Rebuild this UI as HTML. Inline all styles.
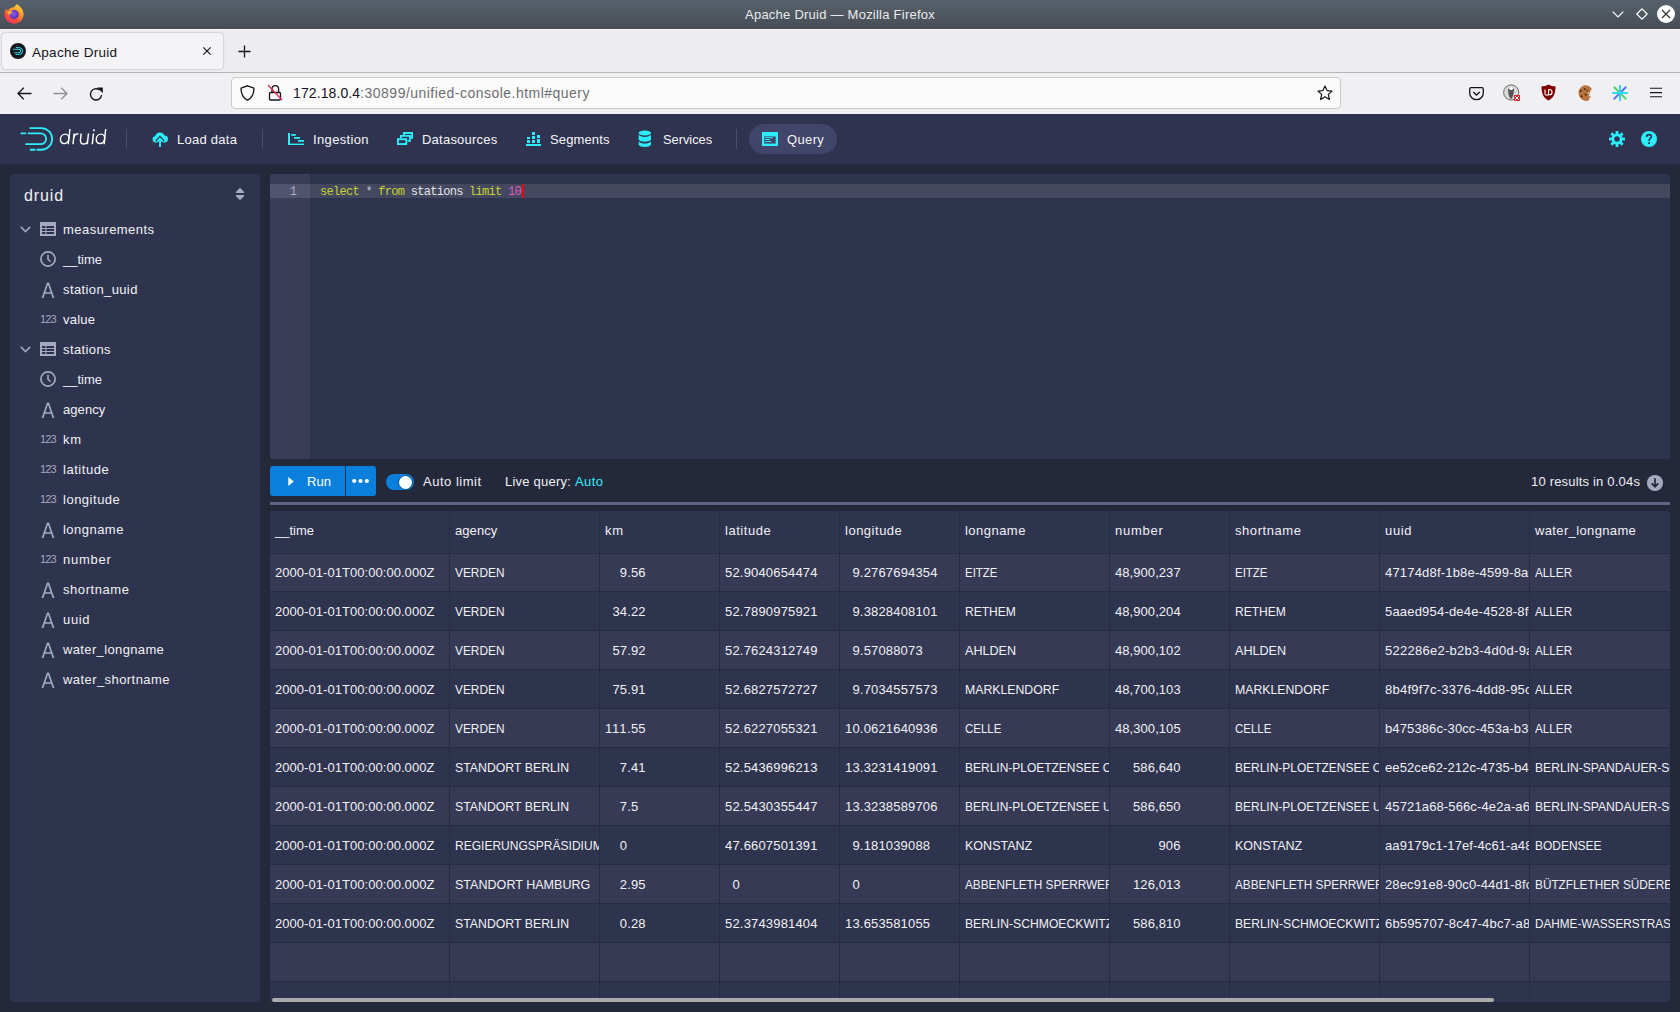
<!DOCTYPE html><html><head><meta charset="utf-8">
<style>
*{box-sizing:border-box;margin:0;padding:0}
html,body{width:1680px;height:1012px;overflow:hidden;background:#24283b;font-family:"Liberation Sans",sans-serif;position:relative}
.a{position:absolute;white-space:nowrap}
svg{position:absolute;display:block;overflow:visible}
#title{left:0;top:0;width:1680px;height:29px;background:linear-gradient(#58616b,#464d56)}
#tabbar{left:0;top:29px;width:1680px;height:44px;background:#ededf0;border-top:1px solid #f8f8f9;border-bottom:1px solid #b4b4b7}
#tab{left:2px;top:33px;width:221px;height:36px;background:#f4f4f6;border-radius:4px;box-shadow:0 0 2px rgba(0,0,0,.35)}
#nav{left:0;top:73px;width:1680px;height:41px;background:#f0f0f3}
#url{left:231px;top:77px;width:1110px;height:32px;background:#fbfbfc;border:1px solid #c9c9cc;border-radius:4px}
#hdr{left:0;top:114px;width:1680px;height:50px;background:#2f3350}
.nt{color:#f5f6f9;font-size:13px;top:132px;line-height:16px}
.ndiv{width:1px;background:#4b4f69;top:129px;height:20px}
#pill{left:749px;top:124px;width:88px;height:30px;border-radius:15px;background:#41456a}
.panel{background:#2f344e;border-radius:3px}
.st{color:#f0f1f5;font-size:13px;line-height:16px;left:63px}
.ic{fill:#a5aac0}
</style></head><body>
<!-- title bar -->
<div class="a" id="title"></div>
<svg style="left:4px;top:4px" width="20" height="20" viewBox="0 0 20 20">
 <defs><linearGradient id="fg1" x1="0.8" y1="0" x2="0.2" y2="1"><stop offset="0" stop-color="#ffde3a"></stop><stop offset=".35" stop-color="#ff9a2a"></stop><stop offset=".7" stop-color="#ff4d3a"></stop><stop offset="1" stop-color="#e72f74"></stop></linearGradient>
 <radialGradient id="fg2" cx="0.45" cy="0.45" r="0.6"><stop offset="0" stop-color="#8e5cf0"></stop><stop offset="1" stop-color="#4b2bb5"></stop></radialGradient></defs>
 <path d="M12.3 0 C15.5 1.8 19.6 5 19.6 10.2 A9.6 9.6 0 0 1 0.4 10.2 C0.4 7.6 1.4 5.6 2.6 4.4 C2.6 5.6 3.2 6.4 4 6.8 C4.8 4.6 7 3.2 9.2 3.4 C10.8 2.4 12 1.4 12.3 0 Z" fill="url(#fg1)"></path>
 <circle cx="10.2" cy="10.6" r="4.6" fill="url(#fg2)"></circle>
 <path d="M3 8 C4.5 6.5 7.5 6.8 9 8.6 C7.4 8.8 6.4 9.6 6.2 11 C4.8 10.6 3.8 9.6 3 8Z" fill="#ffb23a"></path>
</svg>
<div class="a" style="left:0;top:0;width:1680px;height:28px;text-align:center;color:#e8eaec;font-size:13px;line-height:29px"><span style="position: relative; left: 0px; letter-spacing: 0.239px;">Apache Druid — Mozilla Firefox</span></div>
<svg style="left:1612px;top:11px" width="12" height="7" viewBox="0 0 12 7"><path d="M0.7 0.7 L6 6 L11.3 0.7" fill="none" stroke="#fff" stroke-width="1.2"></path></svg>
<svg style="left:1636px;top:8px" width="12" height="12" viewBox="0 0 12 12"><path d="M6 0.8 L11.2 6 L6 11.2 L0.8 6 Z" fill="none" stroke="#fff" stroke-width="1.2"></path></svg>
<svg style="left:1657px;top:5px" width="18" height="18" viewBox="0 0 18 18"><circle cx="9" cy="9" r="9" fill="#fff"></circle><path d="M5 5 L13 13 M13 5 L5 13" stroke="#2a2e33" stroke-width="1.1"></path></svg>

<!-- tab bar -->
<div class="a" id="tabbar"></div>
<div class="a" id="tab"></div>
<svg style="left:10px;top:43px" width="16" height="16" viewBox="0 0 16 16"><circle cx="8" cy="8" r="8" fill="#16181f"></circle>
 <g fill="none" stroke="#2ceefb" stroke-width="0.9" stroke-linecap="round"><path d="M6.3 4.6 H9.2 A3.45 3.45 0 0 1 9.2 11.5 H8"></path><path d="M5.9 11.5 H7"></path><path d="M5.5 6.3 H9 A1.72 1.72 0 0 1 9 9.75 H4.7"></path><path d="M3.3 6.3 H4.5"></path></g></svg>
<div class="a" style="left:32px;top:45px;font-size:13.5px;line-height:16px;color:#15141a"><span style="letter-spacing: 0.303px;">Apache Druid</span></div>
<svg style="left:203px;top:47px" width="8" height="8" viewBox="0 0 8 8"><path d="M0.3 0.3 L7.7 7.7 M7.7 0.3 L0.3 7.7" stroke="#15141a" stroke-width="1.1"></path></svg>
<svg style="left:238px;top:45px" width="13" height="13" viewBox="0 0 13 13"><path d="M6.5 0.5 V12.5 M0.5 6.5 H12.5" stroke="#15141a" stroke-width="1.3"></path></svg>

<!-- nav bar -->
<div class="a" id="nav"></div>
<svg style="left:17px;top:87px" width="15" height="13" viewBox="0 0 15 13"><path d="M14.5 6.5 H1.2 M6.8 0.8 L1 6.5 L6.8 12.2" fill="none" stroke="#15141a" stroke-width="1.3"></path></svg>
<svg style="left:53px;top:87px" width="15" height="13" viewBox="0 0 15 13"><path d="M0.5 6.5 H13.8 M8.2 0.8 L14 6.5 L8.2 12.2" fill="none" stroke="#8f8f94" stroke-width="1.3"></path></svg>
<svg style="left:89px;top:87px" width="15" height="15" viewBox="0 0 15 15"><path d="M12.6 8.2 A5.6 5.6 0 1 1 10.5 3" fill="none" stroke="#15141a" stroke-width="1.4"></path><path d="M8.2 0.6 L13.8 0.6 L13.8 6.2 Z" fill="#15141a"></path></svg>
<div class="a" id="url"></div>
<svg style="left:240px;top:85px" width="15" height="16" viewBox="0 0 15 16"><path d="M7.5 0.8 L14 3.2 C14 9.5 11.5 13.2 7.5 15.2 C3.5 13.2 1 9.5 1 3.2 Z" fill="none" stroke="#15141a" stroke-width="1.3"></path></svg>
<svg style="left:268px;top:84px" width="15" height="17" viewBox="0 0 15 17"><path d="M2 8.5 H11.5 A1 1 0 0 1 12.5 9.5 V15 A1 1 0 0 1 11.5 16 H2.5 A1 1 0 0 1 1.5 15 V9.5 A1 1 0 0 1 2.5 8.5 M4 8.5 V5 A3.3 3.3 0 0 1 10.6 5 V8.5" fill="none" stroke="#15141a" stroke-width="1.3"></path><path d="M0 1 L14 16" stroke="#e22850" stroke-width="1.3"></path></svg>
<div class="a" style="left:293px;top:84px;font-size:14px;line-height:18px;color:#15141a"><span style="letter-spacing: 0.104px;">172.18.0.4</span><span style="color: rgb(110, 110, 115); letter-spacing: 0.475px;">:30899/unified-console.html#query</span></div>
<svg style="left:1317px;top:85px" width="16" height="16" viewBox="0 0 16 16"><path d="M8 1 L10.1 5.6 L15 6.1 L11.3 9.4 L12.4 14.4 L8 11.8 L3.6 14.4 L4.7 9.4 L1 6.1 L5.9 5.6 Z" fill="none" stroke="#15141a" stroke-width="1.2" stroke-linejoin="round"></path></svg>
<svg style="left:1468.5px;top:86.5px" width="15" height="13" viewBox="0 0 15 13"><path d="M2 0.7 H13 A1.3 1.3 0 0 1 14.3 2 V5.9 A6.8 6.8 0 0 1 0.7 5.9 V2 A1.3 1.3 0 0 1 2 0.7 Z" fill="none" stroke="#15141a" stroke-width="1.3"></path><path d="M4.3 5 L7.5 8 L10.7 5" fill="none" stroke="#15141a" stroke-width="1.4"></path></svg>
<svg style="left:1503px;top:84px" width="18" height="18" viewBox="0 0 18 18"><circle cx="8.2" cy="8.5" r="7.6" fill="#d8d8d8" stroke="#6a6a6a" stroke-width="1"></circle><path d="M5 4 C5 9 6 14 8 15 C10 14 11 9 11 4 C10 6 6 6 5 4Z" fill="#555"></path><circle cx="8.2" cy="4.5" r="1.6" fill="#fff"></circle><rect x="11" y="11" width="6" height="6" fill="#e02828"></rect><path d="M12 12 L16 16 M16 12 L12 16" stroke="#fff" stroke-width="1"></path></svg>
<svg style="left:1541px;top:84px" width="15" height="17" viewBox="0 0 15 17"><path d="M7.5 0.5 C9.5 1.8 12 2.3 14.5 2.3 C14.5 10 12.5 14 7.5 16.5 C2.5 14 0.5 10 0.5 2.3 C3 2.3 5.5 1.8 7.5 0.5Z" fill="#800000"></path><path d="M4 5.5 V9.5 A1.8 1.8 0 0 0 7.6 9.5 V5.5" fill="none" stroke="#fff" stroke-width="1.1"></path><path d="M7.6 5.5 H8.4 A2.6 2.6 0 0 1 8.4 10.8 H7" fill="none" stroke="#fff" stroke-width="1.1"></path></svg>
<svg style="left:1576px;top:85px" width="17" height="17" viewBox="0 0 17 17"><path d="M8.2 0.2 A8 8 0 0 1 16 4.2 C15 4.6 14.2 5.6 14.6 6.6 C13.6 7 13.2 8.2 14 9 C13 9.6 12.8 11 13.8 11.6 C13.4 13 13.2 14.6 12.8 15.6 A8 8 0 1 1 8.2 0.2 Z" fill="#b8743e"></path><circle cx="4.8" cy="6" r="1" fill="#3e2414"></circle><circle cx="8.6" cy="4" r="0.9" fill="#3e2414"></circle><circle cx="5.6" cy="11.2" r="1" fill="#3e2414"></circle><circle cx="9.6" cy="9.4" r="1" fill="#3e2414"></circle><circle cx="11.2" cy="5.6" r="0.8" fill="#3e2414"></circle><circle cx="14.2" cy="12" r="0.9" fill="#d9a070"></circle><circle cx="12.6" cy="8.2" r="0.8" fill="#e9d2bd"></circle></svg>
<svg style="left:1612px;top:85px" width="16" height="16" viewBox="0 0 16 16" stroke-width="2" stroke-linecap="round"><path d="M2.3 2.3 L13.7 13.7" stroke="#55d66b"></path><path d="M13.7 2.3 L2.3 13.7" stroke="#5a78f0"></path><path d="M0.8 8 H15.2" stroke="#2fdcf5"></path><path d="M8 0.8 V15.2" stroke="#36d2f2"></path></svg>
<svg style="left:1650px;top:87px" width="12" height="11" viewBox="0 0 12 11"><path d="M0 1.25 H12 M0 5.6 H12 M0 9.75 H12" stroke="#15141a" stroke-width="1.2"></path></svg>
<!-- druid header -->
<div class="a" id="hdr"></div>
<svg style="left:0;top:0" width="60" height="160" viewBox="0 0 60 160"><g fill="none" stroke="#2ceefb" stroke-width="1.8" stroke-linecap="round">
<path d="M30.3 128.05 H41.25 A10.85 10.85 0 0 1 41.25 149.75 H37.4"></path>
<path d="M30.6 149.75 H34.8"></path>
<path d="M28.4 133.35 H40.7 A5.42 5.42 0 0 1 40.7 144.2 H26"></path>
<path d="M21.3 133.35 H25.4"></path>
</g></svg>
<svg style="left:0;top:0" width="120" height="160" viewBox="0 0 120 160"><g transform="translate(0 144.3) skewX(-6) translate(0 -144.3)" fill="none" stroke="#fff" stroke-width="1.45">
<ellipse cx="64.1" cy="138.85" rx="4.2" ry="4.75"></ellipse><path d="M68.3 128.9 V144.3"></path>
<path d="M73 144.3 V133.6 M73 137.8 C73.6 135 75.2 133.7 77.4 133.8"></path>
<path d="M80 133.4 V140 A3.65 4.1 0 0 0 87.3 140 V133.4 M87.3 138.5 V144.3"></path>
<path d="M92.3 133.4 V144.3"></path>
<ellipse cx="99.9" cy="138.85" rx="4.2" ry="4.75"></ellipse><path d="M104.1 128.9 V144.3"></path>
</g><g transform="translate(0 144.3) skewX(-6) translate(0 -144.3)" fill="#fff"><circle cx="92.5" cy="130.3" r="1"></circle></g></svg>
<div class="a ndiv" style="left:126px"></div>
<!-- load data icon -->
<svg style="left:152px;top:131px" width="16" height="16" viewBox="0 0 16 16">
<path d="M3.5 11.5 A3.3 3.3 0 0 1 3.2 5 A4.9 4.9 0 0 1 12.4 4.6 A3.45 3.45 0 0 1 12.6 11.5 Z" fill="#2ceefb"></path>
<path d="M8 16 V8.5 M4.6 10.8 L8 7.2 L11.4 10.8" fill="none" stroke="#2f3350" stroke-width="3.6"></path>
<path d="M8 16 V8.3 M5.1 10.6 L8 7.6 L10.9 10.6" fill="none" stroke="#2ceefb" stroke-width="1.9"></path>
</svg>
<div class="a nt" style="left:177px"><span style="letter-spacing: 0.268px;">Load data</span></div>
<div class="a ndiv" style="left:262px"></div>
<!-- ingestion icon gantt -->
<svg style="left:288px;top:133px" width="16" height="12" viewBox="0 0 16 12" fill="#2ceefb">
<rect x="0" y="0" width="2" height="12"></rect><rect x="0" y="10.6" width="16" height="1.4"></rect>
<rect x="3.2" y="1" width="4.6" height="1.8"></rect><rect x="6" y="4" width="6" height="1.8"></rect><rect x="10" y="7" width="6" height="1.8"></rect>
</svg>
<div class="a nt" style="left:313px"><span style="letter-spacing: 0.352px;">Ingestion</span></div>
<!-- datasources multi-select -->
<svg style="left:397px;top:132px" width="16" height="13" viewBox="0 0 16 13" fill="none" stroke="#2ceefb" stroke-width="1.9">
<rect x="0.95" y="7.2" width="8.3" height="4.85"></rect>
<path d="M3.9 6.2 V3.9 H12.9 V8.9 H10.5"></path>
<path d="M6.9 3 V0.95 H15.05 V5.9 H13.8"></path>
</svg>
<div class="a nt" style="left:422px"><span style="letter-spacing: 0.233px;">Datasources</span></div>
<!-- segments stacked-chart -->
<svg style="left:526px;top:132px" width="16" height="14" viewBox="0 0 16 14" fill="#2ceefb">
<rect x="0" y="12" width="15" height="2"></rect>
<rect x="1" y="5" width="3" height="2"></rect><rect x="1" y="8" width="3" height="3"></rect>
<rect x="6" y="0" width="3" height="3"></rect><rect x="6" y="4" width="3" height="3"></rect><rect x="6" y="8" width="3" height="3"></rect>
<rect x="11" y="3" width="3" height="3"></rect><rect x="11" y="7" width="3" height="4"></rect>
</svg>
<div class="a nt" style="left:550px"><span style="letter-spacing: 0.129px;">Segments</span></div>
<!-- services database -->
<svg style="left:638px;top:130px" width="14" height="18" viewBox="0 0 14 18" fill="#2ceefb">
<ellipse cx="6.8" cy="3" rx="6.2" ry="2.6"></ellipse>
<path d="M0.6 4.6 C1.5 6.3 4 6.9 6.8 6.9 C9.6 6.9 12.1 6.3 13 4.6 V9.6 C12.1 11.2 9.6 11.8 6.8 11.8 C4 11.8 1.5 11.2 0.6 9.6 Z"></path>
<path d="M0.6 11.3 C1.5 13 4 13.6 6.8 13.6 C9.6 13.6 12.1 13 13 11.3 V14.6 C12.1 16.4 9.6 17 6.8 17 C4 17 1.5 16.4 0.6 14.6 Z"></path>
</svg>
<div class="a nt" style="left:663px"><span style="display: inline-block; transform-origin: 0px 0px; transform: scaleX(0.9846);">Services</span></div>
<div class="a ndiv" style="left:736px"></div>
<div class="a" id="pill"></div>
<svg style="left:762px;top:132px" width="16" height="14" viewBox="0 0 16 14">
<rect x="0" y="0" width="16" height="14" fill="#2ceefb"></rect>
<rect x="2.3" y="4.4" width="11.4" height="7.2" fill="#41456a"></rect>
<rect x="3.2" y="5.2" width="7.8" height="1" fill="#2ceefb"></rect><rect x="3.2" y="7" width="4.6" height="1" fill="#2ceefb"></rect><rect x="3.2" y="9" width="6" height="1" fill="#2ceefb"></rect>
</svg>
<div class="a nt" style="left:787px"><span style="letter-spacing: 0.365px;">Query</span></div>
<!-- cog -->
<svg style="left:1609px;top:131px" width="16" height="16" viewBox="0 0 16 16">
<g fill="#2ceefb"><rect x="6.6" y="0" width="2.8" height="16"></rect><rect x="0" y="6.6" width="16" height="2.8"></rect>
<rect x="6.6" y="0" width="2.8" height="16" transform="rotate(45 8 8)"></rect><rect x="0" y="6.6" width="16" height="2.8" transform="rotate(45 8 8)"></rect>
<circle cx="8" cy="8" r="5.6"></circle></g><circle cx="8" cy="8" r="2.75" fill="#2f3350"></circle>
</svg>
<!-- help -->
<svg style="left:1641px;top:131px" width="16" height="16" viewBox="0 0 16 16">
<circle cx="8" cy="8" r="8" fill="#2ceefb"></circle>
<path d="M5.6 5.9 C5.6 4.4 6.6 3.6 8 3.6 C9.5 3.6 10.4 4.5 10.4 5.6 C10.4 7.2 8.5 7.4 8.1 9.2 V10" fill="none" stroke="#2f3350" stroke-width="1.6"></path>
<rect x="7.2" y="11.2" width="1.8" height="1.8" fill="#2f3350"></rect>
</svg>
<!-- sidebar -->
<div class="a panel" style="left:10px;top:174px;width:250px;height:828px"></div>
<div class="a" style="left:24px;top:187px;font-size:16px;line-height:18px;color:#f0f1f5"><span style="letter-spacing: 0.886px;">druid</span></div>
<svg style="left:235px;top:187px" width="10" height="14" viewBox="0 0 10 14"><path d="M5 0.7 L9.1 5 V5.9 H0.9 V5 Z M0.9 8 H9.1 V8.9 L5 13.2 L0.9 8.9 Z" fill="#a5aac0"></path></svg>
<svg style="left:20px;top:226px" width="11" height="7" viewBox="0 0 11 7"><path d="M0.8 0.8 L5.5 5.5 L10.2 0.8" fill="none" stroke="#a5aac0" stroke-width="1.6"></path></svg>
<svg style="left:40px;top:222px" width="16" height="14" viewBox="0 0 16 14"><rect x="0" y="0" width="16" height="14" fill="#a5aac0"></rect><rect x="2" y="4" width="3.4" height="2" fill="#2f344e"></rect><rect x="6.4" y="4" width="7.6" height="2" fill="#2f344e"></rect><rect x="2" y="7" width="3.4" height="2" fill="#2f344e"></rect><rect x="6.4" y="7" width="7.6" height="2" fill="#2f344e"></rect><rect x="2" y="10" width="3.4" height="2" fill="#2f344e"></rect><rect x="6.4" y="10" width="7.6" height="2" fill="#2f344e"></rect></svg>
<div class="a st" style="top:222px"><span style="letter-spacing: 0.464px;">measurements</span></div>
<svg style="left:40px;top:251px" width="16" height="16" viewBox="0 0 16 16"><circle cx="8" cy="8" r="7.1" fill="none" stroke="#a5aac0" stroke-width="1.7"></circle><path d="M8 3.8 V8.2 L10.6 10.8" fill="none" stroke="#a5aac0" stroke-width="1.6"></path></svg>
<div class="a st" style="top:252px"><span style="display: inline-block; transform-origin: 0px 0px; transform: scaleX(0.9971);">__time</span></div>
<svg style="left:41px;top:282px" width="14" height="16" viewBox="0 0 14 16"><path d="M0.6 16 L6 0.6 H8 L13.4 16 H11.6 L10.2 11.8 H3.8 L2.4 16 Z M4.4 10.2 H9.6 L7 2.6 Z" fill="#a5aac0" fill-rule="evenodd"></path></svg>
<div class="a st" style="top:282px"><span style="letter-spacing: 0.387px;">station_uuid</span></div>
<div class="a" style="left:40px;top:312px;font-size:11px;line-height:14px;color:#a5aac0;letter-spacing:-0.9px">123</div>
<div class="a st" style="top:312px"><span style="letter-spacing: 0.245px;">value</span></div>
<svg style="left:20px;top:346px" width="11" height="7" viewBox="0 0 11 7"><path d="M0.8 0.8 L5.5 5.5 L10.2 0.8" fill="none" stroke="#a5aac0" stroke-width="1.6"></path></svg>
<svg style="left:40px;top:342px" width="16" height="14" viewBox="0 0 16 14"><rect x="0" y="0" width="16" height="14" fill="#a5aac0"></rect><rect x="2" y="4" width="3.4" height="2" fill="#2f344e"></rect><rect x="6.4" y="4" width="7.6" height="2" fill="#2f344e"></rect><rect x="2" y="7" width="3.4" height="2" fill="#2f344e"></rect><rect x="6.4" y="7" width="7.6" height="2" fill="#2f344e"></rect><rect x="2" y="10" width="3.4" height="2" fill="#2f344e"></rect><rect x="6.4" y="10" width="7.6" height="2" fill="#2f344e"></rect></svg>
<div class="a st" style="top:342px"><span style="letter-spacing: 0.39px;">stations</span></div>
<svg style="left:40px;top:371px" width="16" height="16" viewBox="0 0 16 16"><circle cx="8" cy="8" r="7.1" fill="none" stroke="#a5aac0" stroke-width="1.7"></circle><path d="M8 3.8 V8.2 L10.6 10.8" fill="none" stroke="#a5aac0" stroke-width="1.6"></path></svg>
<div class="a st" style="top:372px"><span style="display: inline-block; transform-origin: 0px 0px; transform: scaleX(0.9971);">__time</span></div>
<svg style="left:41px;top:402px" width="14" height="16" viewBox="0 0 14 16"><path d="M0.6 16 L6 0.6 H8 L13.4 16 H11.6 L10.2 11.8 H3.8 L2.4 16 Z M4.4 10.2 H9.6 L7 2.6 Z" fill="#a5aac0" fill-rule="evenodd"></path></svg>
<div class="a st" style="top:402px"><span style="letter-spacing: 0.069px;">agency</span></div>
<div class="a" style="left:40px;top:432px;font-size:11px;line-height:14px;color:#a5aac0;letter-spacing:-0.9px">123</div>
<div class="a st" style="top:432px"><span style="letter-spacing: 0.786px;">km</span></div>
<div class="a" style="left:40px;top:462px;font-size:11px;line-height:14px;color:#a5aac0;letter-spacing:-0.9px">123</div>
<div class="a st" style="top:462px"><span style="letter-spacing: 0.538px;">latitude</span></div>
<div class="a" style="left:40px;top:492px;font-size:11px;line-height:14px;color:#a5aac0;letter-spacing:-0.9px">123</div>
<div class="a st" style="top:492px"><span style="letter-spacing: 0.508px;">longitude</span></div>
<svg style="left:41px;top:522px" width="14" height="16" viewBox="0 0 14 16"><path d="M0.6 16 L6 0.6 H8 L13.4 16 H11.6 L10.2 11.8 H3.8 L2.4 16 Z M4.4 10.2 H9.6 L7 2.6 Z" fill="#a5aac0" fill-rule="evenodd"></path></svg>
<div class="a st" style="top:522px"><span style="letter-spacing: 0.466px;">longname</span></div>
<div class="a" style="left:40px;top:552px;font-size:11px;line-height:14px;color:#a5aac0;letter-spacing:-0.9px">123</div>
<div class="a st" style="top:552px"><span style="letter-spacing: 0.756px;">number</span></div>
<svg style="left:41px;top:582px" width="14" height="16" viewBox="0 0 14 16"><path d="M0.6 16 L6 0.6 H8 L13.4 16 H11.6 L10.2 11.8 H3.8 L2.4 16 Z M4.4 10.2 H9.6 L7 2.6 Z" fill="#a5aac0" fill-rule="evenodd"></path></svg>
<div class="a st" style="top:582px"><span style="letter-spacing: 0.567px;">shortname</span></div>
<svg style="left:41px;top:612px" width="14" height="16" viewBox="0 0 14 16"><path d="M0.6 16 L6 0.6 H8 L13.4 16 H11.6 L10.2 11.8 H3.8 L2.4 16 Z M4.4 10.2 H9.6 L7 2.6 Z" fill="#a5aac0" fill-rule="evenodd"></path></svg>
<div class="a st" style="top:612px"><span style="letter-spacing: 0.659px;">uuid</span></div>
<svg style="left:41px;top:642px" width="14" height="16" viewBox="0 0 14 16"><path d="M0.6 16 L6 0.6 H8 L13.4 16 H11.6 L10.2 11.8 H3.8 L2.4 16 Z M4.4 10.2 H9.6 L7 2.6 Z" fill="#a5aac0" fill-rule="evenodd"></path></svg>
<div class="a st" style="top:642px"><span style="letter-spacing: 0.362px;">water_longname</span></div>
<svg style="left:41px;top:672px" width="14" height="16" viewBox="0 0 14 16"><path d="M0.6 16 L6 0.6 H8 L13.4 16 H11.6 L10.2 11.8 H3.8 L2.4 16 Z M4.4 10.2 H9.6 L7 2.6 Z" fill="#a5aac0" fill-rule="evenodd"></path></svg>
<div class="a st" style="top:672px"><span style="letter-spacing: 0.429px;">water_shortname</span></div>
<!-- editor -->
<div class="a panel" style="left:270px;top:174px;width:1400px;height:285px;overflow:hidden">
  <div class="a" style="left:0;top:0;width:40px;height:285px;background:#393d57"></div>
  <div class="a" style="left:0;top:10px;width:40px;height:14px;background:#50546f"></div>
  <div class="a" style="left:40px;top:10px;width:1360px;height:14px;background:#44485f"></div>
</div>
<div class="a" style="left:270px;top:185px;width:27px;text-align:right;font-family:'Liberation Mono',monospace;font-size:12px;line-height:14px;color:#a9adc0">1</div>
<div class="a" style="left:320px;top:185px;font-family:'Liberation Mono',monospace;font-size:12px;letter-spacing:-0.72px;line-height:14px;color:#e2e4ea"><span style="color:#c5d32e">select</span> <span style="color:#c9cbd6">*</span> <span style="color:#c5d32e">from</span> stations <span style="color:#c5d32e">limit</span> <span style="color:#df5cc0">10</span></div>
<div class="a" style="left:522px;top:184px;width:2px;height:14px;background:#e40a0a"></div>

<!-- toolbar -->
<div class="a" style="left:270px;top:466px;width:106px;height:30px;background:#0a80dc;border-radius:3px"></div>
<div class="a" style="left:345px;top:466px;width:1px;height:30px;background:#1c2a44"></div>
<svg style="left:288px;top:477px" width="6" height="9" viewBox="0 0 6 9"><path d="M0.3 0 L5.8 4.5 L0.3 9 Z" fill="#fff"></path></svg>
<div class="a" style="left:307px;top:474px;font-size:13px;line-height:16px;color:#fff"><span style="letter-spacing: 0.045px;">Run</span></div>
<svg style="left:352px;top:478px" width="17" height="6" viewBox="0 0 17 6" fill="#fff"><circle cx="2.2" cy="3" r="2.1"></circle><circle cx="8.5" cy="3" r="2.1"></circle><circle cx="14.8" cy="3" r="2.1"></circle></svg>
<div class="a" style="left:386px;top:474px;width:28px;height:16px;border-radius:8px;background:#0a80dc"></div>
<div class="a" style="left:399px;top:476px;width:13px;height:13px;border-radius:50%;background:#fff;box-shadow:0 0 0 1px rgba(16,22,26,.3)"></div>
<div class="a" style="left:423px;top:474px;font-size:13px;line-height:16px;color:#f0f1f5"><span style="letter-spacing: 0.51px;">Auto limit</span></div>
<div class="a" style="left:505px;top:474px;font-size:13px;line-height:16px;color:#f0f1f5"><span style="letter-spacing: 0.224px;">Live query: </span><span style="color: rgb(44, 238, 251); letter-spacing: 0.474px;">Auto</span></div>
<div class="a" style="left:1531px;top:474px;font-size:13px;line-height:16px;color:#f0f1f5"><span style="letter-spacing: 0.188px;">10 results in 0.04s</span></div>
<svg style="left:1647px;top:475px" width="16" height="16" viewBox="0 0 16 16"><circle cx="8" cy="8" r="8.1" fill="#a5aac0"></circle><path d="M8 3.3 V11.6 M4.6 8.3 L8 11.7 L11.4 8.3" fill="none" stroke="#24283b" stroke-width="1.7"></path></svg>
<div class="a" style="left:270px;top:502px;width:1400px;height:3px;background:#5f6482"></div>
<!-- table -->
<div class="a panel" style="left:270px;top:511px;width:1400px;height:491px;overflow:hidden">
<div class="a" style="left:0;top:43px;width:1400px;height:37px;background:#363a55"></div>
<div class="a" style="left:0;top:81px;width:1400px;height:38px;background:#2f344e"></div>
<div class="a" style="left:0;top:120px;width:1400px;height:38px;background:#363a55"></div>
<div class="a" style="left:0;top:159px;width:1400px;height:38px;background:#2f344e"></div>
<div class="a" style="left:0;top:198px;width:1400px;height:38px;background:#363a55"></div>
<div class="a" style="left:0;top:237px;width:1400px;height:38px;background:#2f344e"></div>
<div class="a" style="left:0;top:276px;width:1400px;height:38px;background:#363a55"></div>
<div class="a" style="left:0;top:315px;width:1400px;height:38px;background:#2f344e"></div>
<div class="a" style="left:0;top:354px;width:1400px;height:38px;background:#363a55"></div>
<div class="a" style="left:0;top:393px;width:1400px;height:38px;background:#2f344e"></div>
<div class="a" style="left:0;top:432px;width:1400px;height:38px;background:#363a55"></div>
<div class="a" style="left:0;top:471px;width:1400px;height:38px;background:#2f344e"></div>
<div class="a" style="left:0;top:42px;width:1400px;height:1px;background:#282c42"></div>
<div class="a" style="left:0;top:80px;width:1400px;height:1px;background:#282c42"></div>
<div class="a" style="left:0;top:119px;width:1400px;height:1px;background:#282c42"></div>
<div class="a" style="left:0;top:158px;width:1400px;height:1px;background:#282c42"></div>
<div class="a" style="left:0;top:197px;width:1400px;height:1px;background:#282c42"></div>
<div class="a" style="left:0;top:236px;width:1400px;height:1px;background:#282c42"></div>
<div class="a" style="left:0;top:275px;width:1400px;height:1px;background:#282c42"></div>
<div class="a" style="left:0;top:314px;width:1400px;height:1px;background:#282c42"></div>
<div class="a" style="left:0;top:353px;width:1400px;height:1px;background:#282c42"></div>
<div class="a" style="left:0;top:392px;width:1400px;height:1px;background:#282c42"></div>
<div class="a" style="left:0;top:431px;width:1400px;height:1px;background:#282c42"></div>
<div class="a" style="left:0;top:470px;width:1400px;height:1px;background:#282c42"></div>
<div class="a" style="left:179px;top:0;width:1px;height:491px;background:#282c42"></div>
<div class="a" style="left:329px;top:0;width:1px;height:491px;background:#282c42"></div>
<div class="a" style="left:449px;top:0;width:1px;height:491px;background:#282c42"></div>
<div class="a" style="left:569px;top:0;width:1px;height:491px;background:#282c42"></div>
<div class="a" style="left:689px;top:0;width:1px;height:491px;background:#282c42"></div>
<div class="a" style="left:839px;top:0;width:1px;height:491px;background:#282c42"></div>
<div class="a" style="left:959px;top:0;width:1px;height:491px;background:#282c42"></div>
<div class="a" style="left:1109px;top:0;width:1px;height:491px;background:#282c42"></div>
<div class="a" style="left:1259px;top:0;width:1px;height:491px;background:#282c42"></div>
<div class="a" style="left:2px;top:487px;width:1222px;height:4px;border-radius:2px;background:#ababab"></div>
</div>
<div class="a" style="left:270px;top:511px;width:179px;height:42px;overflow:hidden"><div class="a" style="left:5px;top:12px;font-size:13px;line-height:16px;color:#f0f1f5"><span style="display: inline-block; transform-origin: 0px 0px; transform: scaleX(0.9971);">__time</span></div></div>
<div class="a" style="left:450px;top:511px;width:149px;height:42px;overflow:hidden"><div class="a" style="left:5px;top:12px;font-size:13px;line-height:16px;color:#f0f1f5"><span style="letter-spacing: 0.069px;">agency</span></div></div>
<div class="a" style="left:600px;top:511px;width:119px;height:42px;overflow:hidden"><div class="a" style="left:5px;top:12px;font-size:13px;line-height:16px;color:#f0f1f5"><span style="letter-spacing: 0.786px;">km</span></div></div>
<div class="a" style="left:720px;top:511px;width:119px;height:42px;overflow:hidden"><div class="a" style="left:5px;top:12px;font-size:13px;line-height:16px;color:#f0f1f5"><span style="letter-spacing: 0.538px;">latitude</span></div></div>
<div class="a" style="left:840px;top:511px;width:119px;height:42px;overflow:hidden"><div class="a" style="left:5px;top:12px;font-size:13px;line-height:16px;color:#f0f1f5"><span style="letter-spacing: 0.508px;">longitude</span></div></div>
<div class="a" style="left:960px;top:511px;width:149px;height:42px;overflow:hidden"><div class="a" style="left:5px;top:12px;font-size:13px;line-height:16px;color:#f0f1f5"><span style="letter-spacing: 0.466px;">longname</span></div></div>
<div class="a" style="left:1110px;top:511px;width:119px;height:42px;overflow:hidden"><div class="a" style="left:5px;top:12px;font-size:13px;line-height:16px;color:#f0f1f5"><span style="letter-spacing: 0.756px;">number</span></div></div>
<div class="a" style="left:1230px;top:511px;width:149px;height:42px;overflow:hidden"><div class="a" style="left:5px;top:12px;font-size:13px;line-height:16px;color:#f0f1f5"><span style="letter-spacing: 0.567px;">shortname</span></div></div>
<div class="a" style="left:1380px;top:511px;width:149px;height:42px;overflow:hidden"><div class="a" style="left:5px;top:12px;font-size:13px;line-height:16px;color:#f0f1f5"><span style="letter-spacing: 0.659px;">uuid</span></div></div>
<div class="a" style="left:1530px;top:511px;width:140px;height:42px;overflow:hidden"><div class="a" style="left:5px;top:12px;font-size:13px;line-height:16px;color:#f0f1f5"><span style="letter-spacing: 0.362px;">water_longname</span></div></div>
<div class="a" style="left:270px;top:554px;width:179px;height:38px;overflow:hidden"><div class="a" style="left:5px;top:11px;font-size:13px;line-height:16px;color:#f0f1f5"><span style="letter-spacing: 0.048px;">2000-01-01T00:00:00.000Z</span></div></div>
<div class="a" style="left:450px;top:554px;width:149px;height:38px;overflow:hidden"><div class="a" style="left:5px;top:11px;font-size:13px;line-height:16px;color:#f0f1f5"><span style="display: inline-block; transform-origin: 0px 0px; transform: scaleX(0.9129);">VERDEN</span></div></div>
<div class="a" style="left:600px;top:554px;width:119px;height:38px;overflow:hidden"><div class="a" style="left:19.87px;top:11px;font-size:13px;line-height:16px;color:#f0f1f5"><span style="letter-spacing: 0.199px;">9</span></div><div class="a" style="left:27.30px;top:11px;font-size:13px;line-height:16px;color:#f0f1f5"><span style="letter-spacing: 0.083px;">.56</span></div></div>
<div class="a" style="left:720px;top:554px;width:119px;height:38px;overflow:hidden"><div class="a" style="left:5.00px;top:11px;font-size:13px;line-height:16px;color:#f0f1f5"><span style="letter-spacing: 0.199px;">52</span></div><div class="a" style="left:19.87px;top:11px;font-size:13px;line-height:16px;color:#f0f1f5"><span style="letter-spacing: 0.17px;">.9040654474</span></div></div>
<div class="a" style="left:840px;top:554px;width:119px;height:38px;overflow:hidden"><div class="a" style="left:12.43px;top:11px;font-size:13px;line-height:16px;color:#f0f1f5"><span style="letter-spacing: 0.199px;">9</span></div><div class="a" style="left:19.87px;top:11px;font-size:13px;line-height:16px;color:#f0f1f5"><span style="letter-spacing: 0.17px;">.2767694354</span></div></div>
<div class="a" style="left:960px;top:554px;width:149px;height:38px;overflow:hidden"><div class="a" style="left:5px;top:11px;font-size:13px;line-height:16px;color:#f0f1f5"><span style="display: inline-block; transform-origin: 0px 0px; transform: scaleX(0.88);">EITZE</span></div></div>
<div class="a" style="left:1110px;top:554px;width:119px;height:38px;overflow:hidden"><div class="a" style="left:5.00px;top:11px;font-size:13px;line-height:16px;color:#f0f1f5"><span style="letter-spacing: 0.063px;">48,900,237</span></div></div>
<div class="a" style="left:1230px;top:554px;width:149px;height:38px;overflow:hidden"><div class="a" style="left:5px;top:11px;font-size:13px;line-height:16px;color:#f0f1f5"><span style="display: inline-block; transform-origin: 0px 0px; transform: scaleX(0.88);">EITZE</span></div></div>
<div class="a" style="left:1380px;top:554px;width:149px;height:38px;overflow:hidden"><div class="a" style="left:5px;top:11px;font-size:13px;line-height:16px;color:#f0f1f5"><span style="letter-spacing: 0.192px;">47174d8f-1b8e-4599-8a5c</span></div></div>
<div class="a" style="left:1530px;top:554px;width:140px;height:38px;overflow:hidden"><div class="a" style="left:5px;top:11px;font-size:13px;line-height:16px;color:#f0f1f5"><span style="display: inline-block; transform-origin: 0px 0px; transform: scaleX(0.9008);">ALLER</span></div></div>
<div class="a" style="left:270px;top:593px;width:179px;height:38px;overflow:hidden"><div class="a" style="left:5px;top:11px;font-size:13px;line-height:16px;color:#f0f1f5"><span style="letter-spacing: 0.048px;">2000-01-01T00:00:00.000Z</span></div></div>
<div class="a" style="left:450px;top:593px;width:149px;height:38px;overflow:hidden"><div class="a" style="left:5px;top:11px;font-size:13px;line-height:16px;color:#f0f1f5"><span style="display: inline-block; transform-origin: 0px 0px; transform: scaleX(0.9129);">VERDEN</span></div></div>
<div class="a" style="left:600px;top:593px;width:119px;height:38px;overflow:hidden"><div class="a" style="left:12.43px;top:11px;font-size:13px;line-height:16px;color:#f0f1f5"><span style="letter-spacing: 0.199px;">34</span></div><div class="a" style="left:27.30px;top:11px;font-size:13px;line-height:16px;color:#f0f1f5"><span style="letter-spacing: 0.083px;">.22</span></div></div>
<div class="a" style="left:720px;top:593px;width:119px;height:38px;overflow:hidden"><div class="a" style="left:5.00px;top:11px;font-size:13px;line-height:16px;color:#f0f1f5"><span style="letter-spacing: 0.199px;">52</span></div><div class="a" style="left:19.87px;top:11px;font-size:13px;line-height:16px;color:#f0f1f5"><span style="letter-spacing: 0.17px;">.7890975921</span></div></div>
<div class="a" style="left:840px;top:593px;width:119px;height:38px;overflow:hidden"><div class="a" style="left:12.43px;top:11px;font-size:13px;line-height:16px;color:#f0f1f5"><span style="letter-spacing: 0.199px;">9</span></div><div class="a" style="left:19.87px;top:11px;font-size:13px;line-height:16px;color:#f0f1f5"><span style="letter-spacing: 0.17px;">.3828408101</span></div></div>
<div class="a" style="left:960px;top:593px;width:149px;height:38px;overflow:hidden"><div class="a" style="left:5px;top:11px;font-size:13px;line-height:16px;color:#f0f1f5"><span style="display: inline-block; transform-origin: 0px 0px; transform: scaleX(0.9277);">RETHEM</span></div></div>
<div class="a" style="left:1110px;top:593px;width:119px;height:38px;overflow:hidden"><div class="a" style="left:5.00px;top:11px;font-size:13px;line-height:16px;color:#f0f1f5"><span style="letter-spacing: 0.063px;">48,900,204</span></div></div>
<div class="a" style="left:1230px;top:593px;width:149px;height:38px;overflow:hidden"><div class="a" style="left:5px;top:11px;font-size:13px;line-height:16px;color:#f0f1f5"><span style="display: inline-block; transform-origin: 0px 0px; transform: scaleX(0.9277);">RETHEM</span></div></div>
<div class="a" style="left:1380px;top:593px;width:149px;height:38px;overflow:hidden"><div class="a" style="left:5px;top:11px;font-size:13px;line-height:16px;color:#f0f1f5"><span style="letter-spacing: 0.194px;">5aaed954-de4e-4528-8f65</span></div></div>
<div class="a" style="left:1530px;top:593px;width:140px;height:38px;overflow:hidden"><div class="a" style="left:5px;top:11px;font-size:13px;line-height:16px;color:#f0f1f5"><span style="display: inline-block; transform-origin: 0px 0px; transform: scaleX(0.9008);">ALLER</span></div></div>
<div class="a" style="left:270px;top:632px;width:179px;height:38px;overflow:hidden"><div class="a" style="left:5px;top:11px;font-size:13px;line-height:16px;color:#f0f1f5"><span style="letter-spacing: 0.048px;">2000-01-01T00:00:00.000Z</span></div></div>
<div class="a" style="left:450px;top:632px;width:149px;height:38px;overflow:hidden"><div class="a" style="left:5px;top:11px;font-size:13px;line-height:16px;color:#f0f1f5"><span style="display: inline-block; transform-origin: 0px 0px; transform: scaleX(0.9129);">VERDEN</span></div></div>
<div class="a" style="left:600px;top:632px;width:119px;height:38px;overflow:hidden"><div class="a" style="left:12.43px;top:11px;font-size:13px;line-height:16px;color:#f0f1f5"><span style="letter-spacing: 0.199px;">57</span></div><div class="a" style="left:27.30px;top:11px;font-size:13px;line-height:16px;color:#f0f1f5"><span style="letter-spacing: 0.083px;">.92</span></div></div>
<div class="a" style="left:720px;top:632px;width:119px;height:38px;overflow:hidden"><div class="a" style="left:5.00px;top:11px;font-size:13px;line-height:16px;color:#f0f1f5"><span style="letter-spacing: 0.199px;">52</span></div><div class="a" style="left:19.87px;top:11px;font-size:13px;line-height:16px;color:#f0f1f5"><span style="letter-spacing: 0.17px;">.7624312749</span></div></div>
<div class="a" style="left:840px;top:632px;width:119px;height:38px;overflow:hidden"><div class="a" style="left:12.43px;top:11px;font-size:13px;line-height:16px;color:#f0f1f5"><span style="letter-spacing: 0.199px;">9</span></div><div class="a" style="left:19.87px;top:11px;font-size:13px;line-height:16px;color:#f0f1f5"><span style="letter-spacing: 0.163px;">.57088073</span></div></div>
<div class="a" style="left:960px;top:632px;width:149px;height:38px;overflow:hidden"><div class="a" style="left:5px;top:11px;font-size:13px;line-height:16px;color:#f0f1f5"><span style="display: inline-block; transform-origin: 0px 0px; transform: scaleX(0.9694);">AHLDEN</span></div></div>
<div class="a" style="left:1110px;top:632px;width:119px;height:38px;overflow:hidden"><div class="a" style="left:5.00px;top:11px;font-size:13px;line-height:16px;color:#f0f1f5"><span style="letter-spacing: 0.063px;">48,900,102</span></div></div>
<div class="a" style="left:1230px;top:632px;width:149px;height:38px;overflow:hidden"><div class="a" style="left:5px;top:11px;font-size:13px;line-height:16px;color:#f0f1f5"><span style="display: inline-block; transform-origin: 0px 0px; transform: scaleX(0.9694);">AHLDEN</span></div></div>
<div class="a" style="left:1380px;top:632px;width:149px;height:38px;overflow:hidden"><div class="a" style="left:5px;top:11px;font-size:13px;line-height:16px;color:#f0f1f5"><span style="letter-spacing: 0.261px;">522286e2-b2b3-4d0d-9a1f</span></div></div>
<div class="a" style="left:1530px;top:632px;width:140px;height:38px;overflow:hidden"><div class="a" style="left:5px;top:11px;font-size:13px;line-height:16px;color:#f0f1f5"><span style="display: inline-block; transform-origin: 0px 0px; transform: scaleX(0.9008);">ALLER</span></div></div>
<div class="a" style="left:270px;top:671px;width:179px;height:38px;overflow:hidden"><div class="a" style="left:5px;top:11px;font-size:13px;line-height:16px;color:#f0f1f5"><span style="letter-spacing: 0.048px;">2000-01-01T00:00:00.000Z</span></div></div>
<div class="a" style="left:450px;top:671px;width:149px;height:38px;overflow:hidden"><div class="a" style="left:5px;top:11px;font-size:13px;line-height:16px;color:#f0f1f5"><span style="display: inline-block; transform-origin: 0px 0px; transform: scaleX(0.9129);">VERDEN</span></div></div>
<div class="a" style="left:600px;top:671px;width:119px;height:38px;overflow:hidden"><div class="a" style="left:12.43px;top:11px;font-size:13px;line-height:16px;color:#f0f1f5"><span style="letter-spacing: 0.199px;">75</span></div><div class="a" style="left:27.30px;top:11px;font-size:13px;line-height:16px;color:#f0f1f5"><span style="letter-spacing: 0.083px;">.91</span></div></div>
<div class="a" style="left:720px;top:671px;width:119px;height:38px;overflow:hidden"><div class="a" style="left:5.00px;top:11px;font-size:13px;line-height:16px;color:#f0f1f5"><span style="letter-spacing: 0.199px;">52</span></div><div class="a" style="left:19.87px;top:11px;font-size:13px;line-height:16px;color:#f0f1f5"><span style="letter-spacing: 0.17px;">.6827572727</span></div></div>
<div class="a" style="left:840px;top:671px;width:119px;height:38px;overflow:hidden"><div class="a" style="left:12.43px;top:11px;font-size:13px;line-height:16px;color:#f0f1f5"><span style="letter-spacing: 0.199px;">9</span></div><div class="a" style="left:19.87px;top:11px;font-size:13px;line-height:16px;color:#f0f1f5"><span style="letter-spacing: 0.17px;">.7034557573</span></div></div>
<div class="a" style="left:960px;top:671px;width:149px;height:38px;overflow:hidden"><div class="a" style="left:5px;top:11px;font-size:13px;line-height:16px;color:#f0f1f5"><span style="display: inline-block; transform-origin: 0px 0px; transform: scaleX(0.9446);">MARKLENDORF</span></div></div>
<div class="a" style="left:1110px;top:671px;width:119px;height:38px;overflow:hidden"><div class="a" style="left:5.00px;top:11px;font-size:13px;line-height:16px;color:#f0f1f5"><span style="letter-spacing: 0.063px;">48,700,103</span></div></div>
<div class="a" style="left:1230px;top:671px;width:149px;height:38px;overflow:hidden"><div class="a" style="left:5px;top:11px;font-size:13px;line-height:16px;color:#f0f1f5"><span style="display: inline-block; transform-origin: 0px 0px; transform: scaleX(0.9446);">MARKLENDORF</span></div></div>
<div class="a" style="left:1380px;top:671px;width:149px;height:38px;overflow:hidden"><div class="a" style="left:5px;top:11px;font-size:13px;line-height:16px;color:#f0f1f5"><span style="letter-spacing: 0.234px;">8b4f9f7c-3376-4dd8-95c2</span></div></div>
<div class="a" style="left:1530px;top:671px;width:140px;height:38px;overflow:hidden"><div class="a" style="left:5px;top:11px;font-size:13px;line-height:16px;color:#f0f1f5"><span style="display: inline-block; transform-origin: 0px 0px; transform: scaleX(0.9008);">ALLER</span></div></div>
<div class="a" style="left:270px;top:710px;width:179px;height:38px;overflow:hidden"><div class="a" style="left:5px;top:11px;font-size:13px;line-height:16px;color:#f0f1f5"><span style="letter-spacing: 0.048px;">2000-01-01T00:00:00.000Z</span></div></div>
<div class="a" style="left:450px;top:710px;width:149px;height:38px;overflow:hidden"><div class="a" style="left:5px;top:11px;font-size:13px;line-height:16px;color:#f0f1f5"><span style="display: inline-block; transform-origin: 0px 0px; transform: scaleX(0.9129);">VERDEN</span></div></div>
<div class="a" style="left:600px;top:710px;width:119px;height:38px;overflow:hidden"><div class="a" style="left:5.00px;top:11px;font-size:13px;line-height:16px;color:#f0f1f5"><span style="letter-spacing: 0.845px;">111</span></div><div class="a" style="left:27.30px;top:11px;font-size:13px;line-height:16px;color:#f0f1f5"><span style="letter-spacing: 0.083px;">.55</span></div></div>
<div class="a" style="left:720px;top:710px;width:119px;height:38px;overflow:hidden"><div class="a" style="left:5.00px;top:11px;font-size:13px;line-height:16px;color:#f0f1f5"><span style="letter-spacing: 0.199px;">52</span></div><div class="a" style="left:19.87px;top:11px;font-size:13px;line-height:16px;color:#f0f1f5"><span style="letter-spacing: 0.17px;">.6227055321</span></div></div>
<div class="a" style="left:840px;top:710px;width:119px;height:38px;overflow:hidden"><div class="a" style="left:5.00px;top:11px;font-size:13px;line-height:16px;color:#f0f1f5"><span style="letter-spacing: 0.199px;">10</span></div><div class="a" style="left:19.87px;top:11px;font-size:13px;line-height:16px;color:#f0f1f5"><span style="letter-spacing: 0.17px;">.0621640936</span></div></div>
<div class="a" style="left:960px;top:710px;width:149px;height:38px;overflow:hidden"><div class="a" style="left:5px;top:11px;font-size:13px;line-height:16px;color:#f0f1f5"><span style="display: inline-block; transform-origin: 0px 0px; transform: scaleX(0.8806);">CELLE</span></div></div>
<div class="a" style="left:1110px;top:710px;width:119px;height:38px;overflow:hidden"><div class="a" style="left:5.00px;top:11px;font-size:13px;line-height:16px;color:#f0f1f5"><span style="letter-spacing: 0.063px;">48,300,105</span></div></div>
<div class="a" style="left:1230px;top:710px;width:149px;height:38px;overflow:hidden"><div class="a" style="left:5px;top:11px;font-size:13px;line-height:16px;color:#f0f1f5"><span style="display: inline-block; transform-origin: 0px 0px; transform: scaleX(0.8806);">CELLE</span></div></div>
<div class="a" style="left:1380px;top:710px;width:149px;height:38px;overflow:hidden"><div class="a" style="left:5px;top:11px;font-size:13px;line-height:16px;color:#f0f1f5"><span style="letter-spacing: 0.122px;">b475386c-30cc-453a-b36e</span></div></div>
<div class="a" style="left:1530px;top:710px;width:140px;height:38px;overflow:hidden"><div class="a" style="left:5px;top:11px;font-size:13px;line-height:16px;color:#f0f1f5"><span style="display: inline-block; transform-origin: 0px 0px; transform: scaleX(0.9008);">ALLER</span></div></div>
<div class="a" style="left:270px;top:749px;width:179px;height:38px;overflow:hidden"><div class="a" style="left:5px;top:11px;font-size:13px;line-height:16px;color:#f0f1f5"><span style="letter-spacing: 0.048px;">2000-01-01T00:00:00.000Z</span></div></div>
<div class="a" style="left:450px;top:749px;width:149px;height:38px;overflow:hidden"><div class="a" style="left:5px;top:11px;font-size:13px;line-height:16px;color:#f0f1f5"><span style="display: inline-block; transform-origin: 0px 0px; transform: scaleX(0.9464);">STANDORT BERLIN</span></div></div>
<div class="a" style="left:600px;top:749px;width:119px;height:38px;overflow:hidden"><div class="a" style="left:19.87px;top:11px;font-size:13px;line-height:16px;color:#f0f1f5"><span style="letter-spacing: 0.199px;">7</span></div><div class="a" style="left:27.30px;top:11px;font-size:13px;line-height:16px;color:#f0f1f5"><span style="letter-spacing: 0.083px;">.41</span></div></div>
<div class="a" style="left:720px;top:749px;width:119px;height:38px;overflow:hidden"><div class="a" style="left:5.00px;top:11px;font-size:13px;line-height:16px;color:#f0f1f5"><span style="letter-spacing: 0.199px;">52</span></div><div class="a" style="left:19.87px;top:11px;font-size:13px;line-height:16px;color:#f0f1f5"><span style="letter-spacing: 0.17px;">.5436996213</span></div></div>
<div class="a" style="left:840px;top:749px;width:119px;height:38px;overflow:hidden"><div class="a" style="left:5.00px;top:11px;font-size:13px;line-height:16px;color:#f0f1f5"><span style="letter-spacing: 0.199px;">13</span></div><div class="a" style="left:19.87px;top:11px;font-size:13px;line-height:16px;color:#f0f1f5"><span style="letter-spacing: 0.17px;">.3231419091</span></div></div>
<div class="a" style="left:960px;top:749px;width:149px;height:38px;overflow:hidden"><div class="a" style="left:5px;top:11px;font-size:13px;line-height:16px;color:#f0f1f5"><span style="display: inline-block; transform-origin: 0px 0px; transform: scaleX(0.9216);">BERLIN-PLOETZENSEE OW</span></div></div>
<div class="a" style="left:1110px;top:749px;width:119px;height:38px;overflow:hidden"><div class="a" style="left:22.99px;top:11px;font-size:13px;line-height:16px;color:#f0f1f5"><span style="letter-spacing: 0.103px;">586,640</span></div></div>
<div class="a" style="left:1230px;top:749px;width:149px;height:38px;overflow:hidden"><div class="a" style="left:5px;top:11px;font-size:13px;line-height:16px;color:#f0f1f5"><span style="display: inline-block; transform-origin: 0px 0px; transform: scaleX(0.9216);">BERLIN-PLOETZENSEE OW</span></div></div>
<div class="a" style="left:1380px;top:749px;width:149px;height:38px;overflow:hidden"><div class="a" style="left:5px;top:11px;font-size:13px;line-height:16px;color:#f0f1f5"><span style="letter-spacing: 0.108px;">ee52ce62-212c-4735-b4a1</span></div></div>
<div class="a" style="left:1530px;top:749px;width:140px;height:38px;overflow:hidden"><div class="a" style="left:5px;top:11px;font-size:13px;line-height:16px;color:#f0f1f5"><span style="display: inline-block; transform-origin: 0px 0px; transform: scaleX(0.9315);">BERLIN-SPANDAUER-SCHIFFFAHRTSKANAL</span></div></div>
<div class="a" style="left:270px;top:788px;width:179px;height:38px;overflow:hidden"><div class="a" style="left:5px;top:11px;font-size:13px;line-height:16px;color:#f0f1f5"><span style="letter-spacing: 0.048px;">2000-01-01T00:00:00.000Z</span></div></div>
<div class="a" style="left:450px;top:788px;width:149px;height:38px;overflow:hidden"><div class="a" style="left:5px;top:11px;font-size:13px;line-height:16px;color:#f0f1f5"><span style="display: inline-block; transform-origin: 0px 0px; transform: scaleX(0.9464);">STANDORT BERLIN</span></div></div>
<div class="a" style="left:600px;top:788px;width:119px;height:38px;overflow:hidden"><div class="a" style="left:19.87px;top:11px;font-size:13px;line-height:16px;color:#f0f1f5"><span style="letter-spacing: 0.199px;">7</span></div><div class="a" style="left:27.30px;top:11px;font-size:13px;line-height:16px;color:#f0f1f5"><span style="letter-spacing: 0.024px;">.5</span></div></div>
<div class="a" style="left:720px;top:788px;width:119px;height:38px;overflow:hidden"><div class="a" style="left:5.00px;top:11px;font-size:13px;line-height:16px;color:#f0f1f5"><span style="letter-spacing: 0.199px;">52</span></div><div class="a" style="left:19.87px;top:11px;font-size:13px;line-height:16px;color:#f0f1f5"><span style="letter-spacing: 0.17px;">.5430355447</span></div></div>
<div class="a" style="left:840px;top:788px;width:119px;height:38px;overflow:hidden"><div class="a" style="left:5.00px;top:11px;font-size:13px;line-height:16px;color:#f0f1f5"><span style="letter-spacing: 0.199px;">13</span></div><div class="a" style="left:19.87px;top:11px;font-size:13px;line-height:16px;color:#f0f1f5"><span style="letter-spacing: 0.17px;">.3238589706</span></div></div>
<div class="a" style="left:960px;top:788px;width:149px;height:38px;overflow:hidden"><div class="a" style="left:5px;top:11px;font-size:13px;line-height:16px;color:#f0f1f5"><span style="display: inline-block; transform-origin: 0px 0px; transform: scaleX(0.9223);">BERLIN-PLOETZENSEE UW</span></div></div>
<div class="a" style="left:1110px;top:788px;width:119px;height:38px;overflow:hidden"><div class="a" style="left:22.99px;top:11px;font-size:13px;line-height:16px;color:#f0f1f5"><span style="letter-spacing: 0.103px;">586,650</span></div></div>
<div class="a" style="left:1230px;top:788px;width:149px;height:38px;overflow:hidden"><div class="a" style="left:5px;top:11px;font-size:13px;line-height:16px;color:#f0f1f5"><span style="display: inline-block; transform-origin: 0px 0px; transform: scaleX(0.9223);">BERLIN-PLOETZENSEE UW</span></div></div>
<div class="a" style="left:1380px;top:788px;width:149px;height:38px;overflow:hidden"><div class="a" style="left:5px;top:11px;font-size:13px;line-height:16px;color:#f0f1f5"><span style="letter-spacing: 0.126px;">45721a68-566c-4e2a-a6b0</span></div></div>
<div class="a" style="left:1530px;top:788px;width:140px;height:38px;overflow:hidden"><div class="a" style="left:5px;top:11px;font-size:13px;line-height:16px;color:#f0f1f5"><span style="display: inline-block; transform-origin: 0px 0px; transform: scaleX(0.9315);">BERLIN-SPANDAUER-SCHIFFFAHRTSKANAL</span></div></div>
<div class="a" style="left:270px;top:827px;width:179px;height:38px;overflow:hidden"><div class="a" style="left:5px;top:11px;font-size:13px;line-height:16px;color:#f0f1f5"><span style="letter-spacing: 0.048px;">2000-01-01T00:00:00.000Z</span></div></div>
<div class="a" style="left:450px;top:827px;width:149px;height:38px;overflow:hidden"><div class="a" style="left:5px;top:11px;font-size:13px;line-height:16px;color:#f0f1f5"><span style="display: inline-block; transform-origin: 0px 0px; transform: scaleX(0.925);">REGIERUNGSPRÄSIDIUM FREIBURG</span></div></div>
<div class="a" style="left:600px;top:827px;width:119px;height:38px;overflow:hidden"><div class="a" style="left:19.87px;top:11px;font-size:13px;line-height:16px;color:#f0f1f5"><span style="letter-spacing: 0.199px;">0</span></div></div>
<div class="a" style="left:720px;top:827px;width:119px;height:38px;overflow:hidden"><div class="a" style="left:5.00px;top:11px;font-size:13px;line-height:16px;color:#f0f1f5"><span style="letter-spacing: 0.199px;">47</span></div><div class="a" style="left:19.87px;top:11px;font-size:13px;line-height:16px;color:#f0f1f5"><span style="letter-spacing: 0.17px;">.6607501391</span></div></div>
<div class="a" style="left:840px;top:827px;width:119px;height:38px;overflow:hidden"><div class="a" style="left:12.43px;top:11px;font-size:13px;line-height:16px;color:#f0f1f5"><span style="letter-spacing: 0.199px;">9</span></div><div class="a" style="left:19.87px;top:11px;font-size:13px;line-height:16px;color:#f0f1f5"><span style="letter-spacing: 0.167px;">.181039088</span></div></div>
<div class="a" style="left:960px;top:827px;width:149px;height:38px;overflow:hidden"><div class="a" style="left:5px;top:11px;font-size:13px;line-height:16px;color:#f0f1f5"><span style="display: inline-block; transform-origin: 0px 0px; transform: scaleX(0.9635);">KONSTANZ</span></div></div>
<div class="a" style="left:1110px;top:827px;width:119px;height:38px;overflow:hidden"><div class="a" style="left:48.41px;top:11px;font-size:13px;line-height:16px;color:#f0f1f5"><span style="letter-spacing: 0.199px;">906</span></div></div>
<div class="a" style="left:1230px;top:827px;width:149px;height:38px;overflow:hidden"><div class="a" style="left:5px;top:11px;font-size:13px;line-height:16px;color:#f0f1f5"><span style="display: inline-block; transform-origin: 0px 0px; transform: scaleX(0.9635);">KONSTANZ</span></div></div>
<div class="a" style="left:1380px;top:827px;width:149px;height:38px;overflow:hidden"><div class="a" style="left:5px;top:11px;font-size:13px;line-height:16px;color:#f0f1f5"><span style="letter-spacing: 0.1px;">aa9179c1-17ef-4c61-a48e</span></div></div>
<div class="a" style="left:1530px;top:827px;width:140px;height:38px;overflow:hidden"><div class="a" style="left:5px;top:11px;font-size:13px;line-height:16px;color:#f0f1f5"><span style="display: inline-block; transform-origin: 0px 0px; transform: scaleX(0.9207);">BODENSEE</span></div></div>
<div class="a" style="left:270px;top:866px;width:179px;height:38px;overflow:hidden"><div class="a" style="left:5px;top:11px;font-size:13px;line-height:16px;color:#f0f1f5"><span style="letter-spacing: 0.048px;">2000-01-01T00:00:00.000Z</span></div></div>
<div class="a" style="left:450px;top:866px;width:149px;height:38px;overflow:hidden"><div class="a" style="left:5px;top:11px;font-size:13px;line-height:16px;color:#f0f1f5"><span style="display: inline-block; transform-origin: 0px 0px; transform: scaleX(0.9657);">STANDORT HAMBURG</span></div></div>
<div class="a" style="left:600px;top:866px;width:119px;height:38px;overflow:hidden"><div class="a" style="left:19.87px;top:11px;font-size:13px;line-height:16px;color:#f0f1f5"><span style="letter-spacing: 0.199px;">2</span></div><div class="a" style="left:27.30px;top:11px;font-size:13px;line-height:16px;color:#f0f1f5"><span style="letter-spacing: 0.083px;">.95</span></div></div>
<div class="a" style="left:720px;top:866px;width:119px;height:38px;overflow:hidden"><div class="a" style="left:12.43px;top:11px;font-size:13px;line-height:16px;color:#f0f1f5"><span style="letter-spacing: 0.199px;">0</span></div></div>
<div class="a" style="left:840px;top:866px;width:119px;height:38px;overflow:hidden"><div class="a" style="left:12.43px;top:11px;font-size:13px;line-height:16px;color:#f0f1f5"><span style="letter-spacing: 0.199px;">0</span></div></div>
<div class="a" style="left:960px;top:866px;width:149px;height:38px;overflow:hidden"><div class="a" style="left:5px;top:11px;font-size:13px;line-height:16px;color:#f0f1f5"><span style="display: inline-block; transform-origin: 0px 0px; transform: scaleX(0.9065);">ABBENFLETH SPERRWERK</span></div></div>
<div class="a" style="left:1110px;top:866px;width:119px;height:38px;overflow:hidden"><div class="a" style="left:22.99px;top:11px;font-size:13px;line-height:16px;color:#f0f1f5"><span style="letter-spacing: 0.103px;">126,013</span></div></div>
<div class="a" style="left:1230px;top:866px;width:149px;height:38px;overflow:hidden"><div class="a" style="left:5px;top:11px;font-size:13px;line-height:16px;color:#f0f1f5"><span style="display: inline-block; transform-origin: 0px 0px; transform: scaleX(0.9065);">ABBENFLETH SPERRWERK</span></div></div>
<div class="a" style="left:1380px;top:866px;width:149px;height:38px;overflow:hidden"><div class="a" style="left:5px;top:11px;font-size:13px;line-height:16px;color:#f0f1f5"><span style="letter-spacing: 0.127px;">28ec91e8-90c0-44d1-8fc5</span></div></div>
<div class="a" style="left:1530px;top:866px;width:140px;height:38px;overflow:hidden"><div class="a" style="left:5px;top:11px;font-size:13px;line-height:16px;color:#f0f1f5"><span style="display: inline-block; transform-origin: 0px 0px; transform: scaleX(0.9084);">BÜTZFLETHER SÜDERELBE</span></div></div>
<div class="a" style="left:270px;top:905px;width:179px;height:38px;overflow:hidden"><div class="a" style="left:5px;top:11px;font-size:13px;line-height:16px;color:#f0f1f5"><span style="letter-spacing: 0.048px;">2000-01-01T00:00:00.000Z</span></div></div>
<div class="a" style="left:450px;top:905px;width:149px;height:38px;overflow:hidden"><div class="a" style="left:5px;top:11px;font-size:13px;line-height:16px;color:#f0f1f5"><span style="display: inline-block; transform-origin: 0px 0px; transform: scaleX(0.9464);">STANDORT BERLIN</span></div></div>
<div class="a" style="left:600px;top:905px;width:119px;height:38px;overflow:hidden"><div class="a" style="left:19.87px;top:11px;font-size:13px;line-height:16px;color:#f0f1f5"><span style="letter-spacing: 0.199px;">0</span></div><div class="a" style="left:27.30px;top:11px;font-size:13px;line-height:16px;color:#f0f1f5"><span style="letter-spacing: 0.083px;">.28</span></div></div>
<div class="a" style="left:720px;top:905px;width:119px;height:38px;overflow:hidden"><div class="a" style="left:5.00px;top:11px;font-size:13px;line-height:16px;color:#f0f1f5"><span style="letter-spacing: 0.199px;">52</span></div><div class="a" style="left:19.87px;top:11px;font-size:13px;line-height:16px;color:#f0f1f5"><span style="letter-spacing: 0.17px;">.3743981404</span></div></div>
<div class="a" style="left:840px;top:905px;width:119px;height:38px;overflow:hidden"><div class="a" style="left:5.00px;top:11px;font-size:13px;line-height:16px;color:#f0f1f5"><span style="letter-spacing: 0.199px;">13</span></div><div class="a" style="left:19.87px;top:11px;font-size:13px;line-height:16px;color:#f0f1f5"><span style="letter-spacing: 0.167px;">.653581055</span></div></div>
<div class="a" style="left:960px;top:905px;width:149px;height:38px;overflow:hidden"><div class="a" style="left:5px;top:11px;font-size:13px;line-height:16px;color:#f0f1f5"><span style="display: inline-block; transform-origin: 0px 0px; transform: scaleX(0.9366);">BERLIN-SCHMOECKWITZ</span></div></div>
<div class="a" style="left:1110px;top:905px;width:119px;height:38px;overflow:hidden"><div class="a" style="left:22.99px;top:11px;font-size:13px;line-height:16px;color:#f0f1f5"><span style="letter-spacing: 0.103px;">586,810</span></div></div>
<div class="a" style="left:1230px;top:905px;width:149px;height:38px;overflow:hidden"><div class="a" style="left:5px;top:11px;font-size:13px;line-height:16px;color:#f0f1f5"><span style="display: inline-block; transform-origin: 0px 0px; transform: scaleX(0.9366);">BERLIN-SCHMOECKWITZ</span></div></div>
<div class="a" style="left:1380px;top:905px;width:149px;height:38px;overflow:hidden"><div class="a" style="left:5px;top:11px;font-size:13px;line-height:16px;color:#f0f1f5"><span style="letter-spacing: 0.173px;">6b595707-8c47-4bc7-a83d</span></div></div>
<div class="a" style="left:1530px;top:905px;width:140px;height:38px;overflow:hidden"><div class="a" style="left:5px;top:11px;font-size:13px;line-height:16px;color:#f0f1f5"><span style="display: inline-block; transform-origin: 0px 0px; transform: scaleX(0.9031);">DAHME-WASSERSTRASSE</span></div></div>

</body></html>
